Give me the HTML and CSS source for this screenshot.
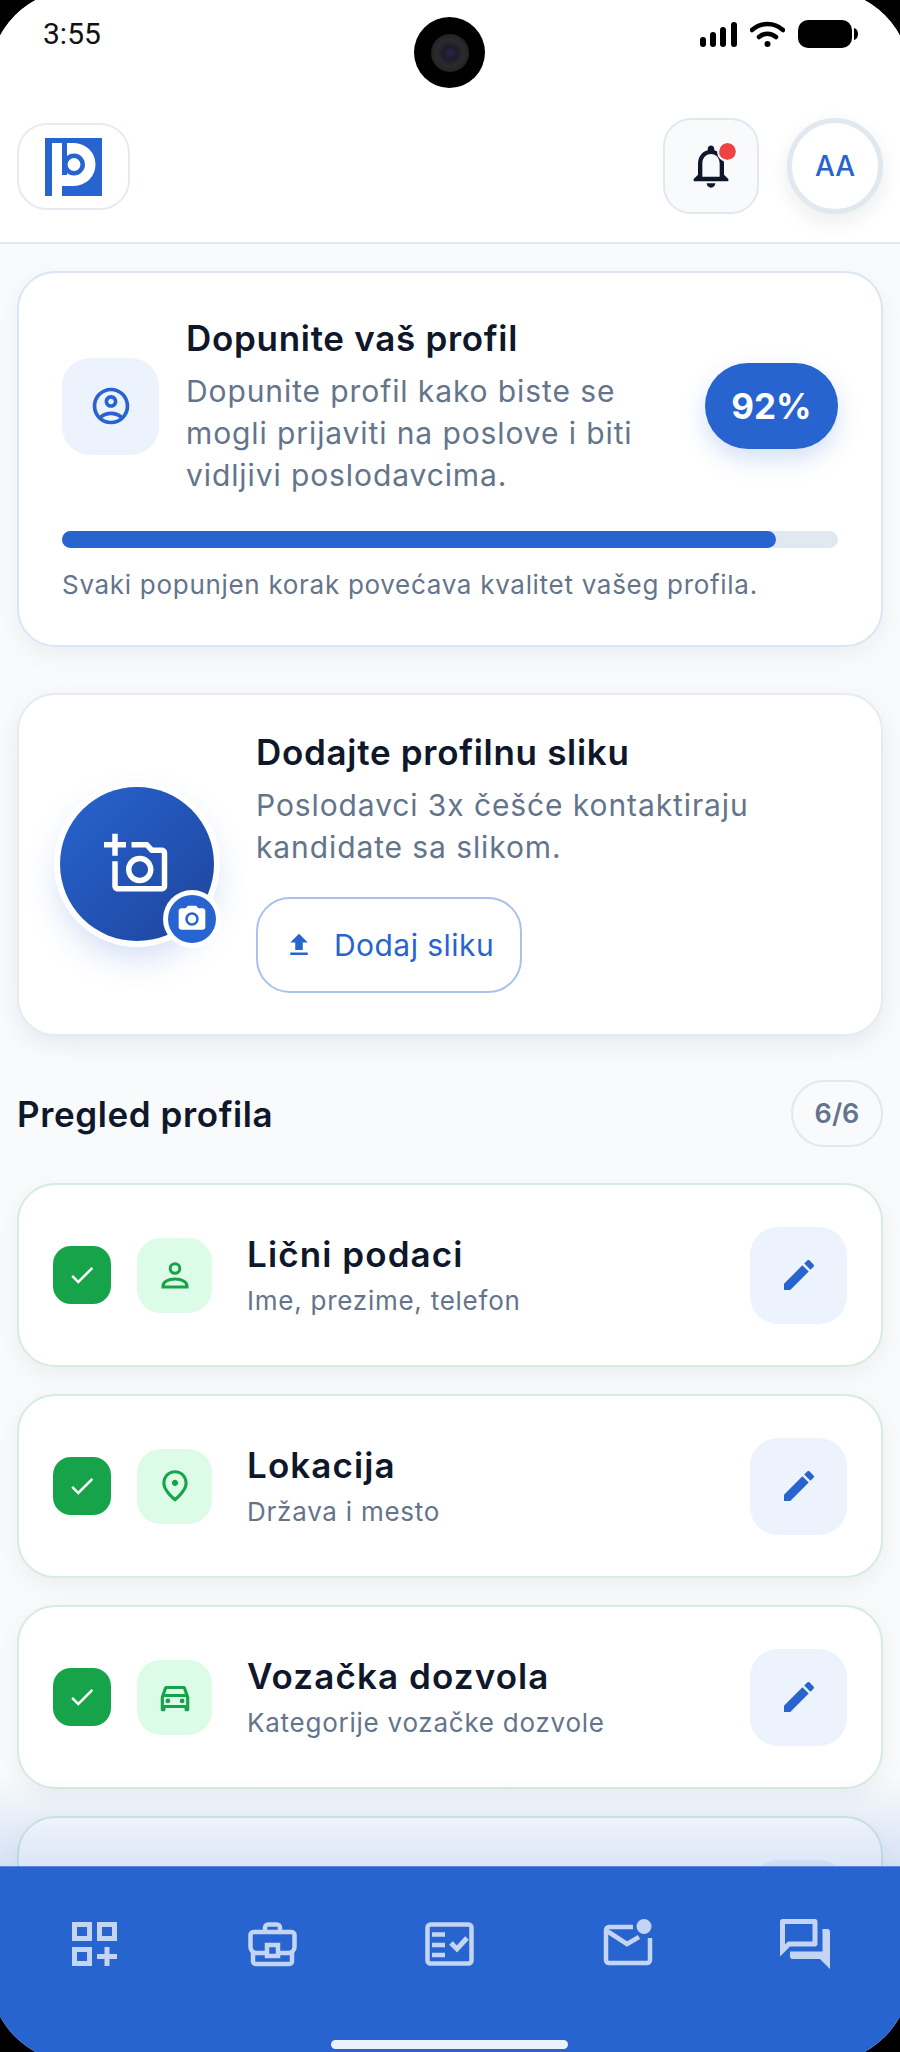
FILE: index.html
```html
<!DOCTYPE html>
<html>
<head>
  <meta charset="utf-8">
  <title>Pregled profila</title>
  <link rel="stylesheet" href="styles.css">
</head>
<body>
  <div class="screen">
    <div class="camera"><span class="lens"></span></div>

    <div class="status-bar">
      <span class="time">3:55</span>
      <div class="status-icons">
        <svg width="37" height="25" viewBox="0 0 37 25"><rect x="0" y="15" width="6" height="10" rx="3"/><rect x="10" y="10" width="6" height="15" rx="3"/><rect x="20" y="5" width="6" height="20" rx="3"/><rect x="31" y="0" width="6" height="25" rx="3"/></svg>
        <svg width="35" height="26" viewBox="0 0 35 26"><path d="M2 9C11 1 24 1 33 9M9 16c5-4.5 12-4.500 17 0" fill="none" stroke="#000" stroke-width="4.500" stroke-linecap="round"/><circle cx="17.500" cy="23" r="3"/></svg>
        <svg width="60" height="28" viewBox="0 0 60 28"><rect x="0" y="0" width="54" height="28" rx="10"/><path d="M56 8c2.500.5 4 3 4 6s-1.500 5.500-4 6z"/></svg>
      </div>
    </div>

    <header class="top-bar">
      <div class="logo-box">
        <svg width="57" height="58" viewBox="0 0 57 58">
          <rect width="57" height="58" fill="#2764cf"/>
          <path d="M7 5H29a21.500 21.500 0 0 1 0 43H17V58H7z" fill="#fff"/>
          <rect x="17" y="5" width="5" height="32" fill="#2764cf"/>
          <circle cx="29" cy="26.500" r="8.700" fill="#fff" stroke="#2764cf" stroke-width="4.500"/>
        </svg>
      </div>
      <div class="top-actions">
        <div class="bell-btn">
          <svg width="52" height="52" viewBox="0 0 24 24" fill="#0f172a"><path d="M12 22c1.100 0 2-.9 2-2h-4c0 1.100.9 2 2 2zm6-6v-5c0-3.070-1.630-5.640-4.500-6.320V4c0-.83-.67-1.500-1.500-1.500s-1.500.67-1.500 1.500v.68C7.640 5.360 6 7.920 6 11v5l-2 2v1h16v-1l-2-2zm-2 1H8v-6c0-2.480 1.510-4.500 4-4.500s4 2.020 4 4.500v6z"/></svg>
          <span class="bell-dot"></span>
        </div>
        <div class="avatar">AA</div>
      </div>
    </header>

    <main class="content">
      <section class="card progress-card">
        <div class="progress-row">
          <div class="soft-box">
            <svg width="44" height="44" viewBox="0 0 24 24" fill="#2764cf"><path d="M12 2C6.480 2 2 6.480 2 12s4.480 10 10 10 10-4.480 10-10S17.520 2 12 2zM7.350 18.500C8.660 17.560 10.260 17 12 17s3.340.56 4.650 1.500C15.340 19.440 13.740 20 12 20s-3.340-.56-4.650-1.500zm10.790-1.380C16.450 15.800 14.320 15 12 15s-4.450.8-6.140 2.120C4.700 15.730 4 13.950 4 12c0-4.420 3.580-8 8-8s8 3.580 8 8c0 1.950-.7 3.730-1.860 5.120z"/><path d="M12 6c-1.930 0-3.500 1.570-3.500 3.500S10.070 13 12 13s3.500-1.570 3.500-3.500S13.930 6 12 6zm0 5c-.83 0-1.500-.67-1.500-1.500S11.170 8 12 8s1.500.67 1.500 1.500S12.830 11 12 11z"/></svg>
          </div>
          <div class="progress-text">
            <h2 class="card-title">Dopunite vaš profil</h2>
            <p class="card-desc">Dopunite profil kako biste se mogli prijaviti na poslove i biti vidljivi poslodavcima.</p>
          </div>
          <div class="percent-pill">92%</div>
        </div>
        <div class="progress-track"><div class="progress-fill" style="width: 92%"></div></div>
        <p class="progress-note">Svaki popunjen korak povećava kvalitet vašeg profila.</p>
      </section>

      <section class="card photo-card">
        <div class="photo-circle">
          <svg width="66" height="66" viewBox="0 0 24 24" fill="#fff"><path d="M21 6h-3.170L16 4h-6v2h5.120l1.830 2H21v12H5v-9H3v9c0 1.100.9 2 2 2h16c1.100 0 2-.9 2-2V8c0-1.100-.9-2-2-2zM8 14c0 2.760 2.240 5 5 5s5-2.240 5-5-2.240-5-5-5-5 2.240-5 5zm5-3c1.650 0 3 1.350 3 3s-1.350 3-3 3-3-1.350-3-3 1.350-3 3-3zM5 6h3V4H5V1H3v3H0v2h3v3h2z"/></svg>
          <span class="photo-badge">
            <svg width="32" height="32" viewBox="0 0 24 24" fill="#fff"><path d="M9 2 7.170 4H4c-1.100 0-2 .9-2 2v12c0 1.100.9 2 2 2h16c1.100 0 2-.9 2-2V6c0-1.100-.9-2-2-2h-3.170L15 2H9zm3 15c-2.760 0-5-2.240-5-5s2.240-5 5-5 5 2.240 5 5-2.240 5-5 5z"/><circle cx="12" cy="12" r="3.200"/></svg>
          </span>
        </div>
        <div class="photo-text">
          <h2 class="card-title">Dodajte profilnu sliku</h2>
          <p class="card-desc">Poslodavci 3x češće kontaktiraju kandidate sa slikom.</p>
          <div class="upload-btn">
            <svg width="30" height="30" viewBox="0 0 24 24" fill="#2764cf"><path d="M9 16h6v-6h4l-7-7-7 7h4zm-4 2h14v2H5z"/></svg>
            <span>Dodaj sliku</span>
          </div>
        </div>
      </section>

      <div class="section-head">
        <h3 class="section-title">Pregled profila</h3>
        <span class="count-pill">6/6</span>
      </div>

      <div class="item-list">
        <div class="item">
          <span class="check-box"><svg width="30" height="30" viewBox="0 0 24 24" fill="#fff"><path d="M9 16.170 4.830 12l-1.420 1.410L9 19 21 7l-1.410-1.410z"/></svg></span>
          <span class="item-icon">
            <svg width="28" height="27" viewBox="0 0 28 27" fill="none" stroke="#16a34a" stroke-width="3"><circle cx="14" cy="6.500" r="4.800"/><path d="M2 25v-1c0-4 5-7 12-7s12 3 12 7v1z"/></svg>
          </span>
          <div class="item-text">
            <div class="item-title">Lični podaci</div>
            <div class="item-sub">Ime, prezime, telefon</div>
          </div>
          <span class="soft-box edit-btn"><svg width="40" height="40" viewBox="0 0 24 24" fill="#2764cf"><path d="M3 17.250V21h3.750L17.810 9.940l-3.750-3.750L3 17.250zM20.710 7.040c.39-.39.39-1.020 0-1.410l-2.340-2.340c-.39-.39-1.020-.39-1.410 0l-1.830 1.830 3.750 3.750 1.830-1.830z"/></svg></span>
        </div>

        <div class="item">
          <span class="check-box"><svg width="30" height="30" viewBox="0 0 24 24" fill="#fff"><path d="M9 16.170 4.830 12l-1.420 1.410L9 19 21 7l-1.410-1.410z"/></svg></span>
          <span class="item-icon">
            <svg width="38" height="38" viewBox="0 0 24 24" fill="#16a34a"><path d="M12 12c-1.100 0-2-.9-2-2s.9-2 2-2 2 .9 2 2-.9 2-2 2zm6-1.800C18 6.570 15.350 4 12 4s-6 2.570-6 6.200c0 2.340 1.950 5.440 6 9.140 4.050-3.700 6-6.800 6-9.140zM12 2c4.200 0 8 3.220 8 8.200 0 3.320-2.670 7.250-8 11.800-5.330-4.550-8-8.480-8-11.800C4 5.220 7.800 2 12 2z"/></svg>
          </span>
          <div class="item-text">
            <div class="item-title">Lokacija</div>
            <div class="item-sub">Država i mesto</div>
          </div>
          <span class="soft-box edit-btn"><svg width="40" height="40" viewBox="0 0 24 24" fill="#2764cf"><path d="M3 17.250V21h3.750L17.810 9.940l-3.750-3.750L3 17.250zM20.710 7.040c.39-.39.39-1.020 0-1.410l-2.340-2.340c-.39-.39-1.020-.39-1.410 0l-1.830 1.830 3.750 3.750 1.830-1.830z"/></svg></span>
        </div>

        <div class="item">
          <span class="check-box"><svg width="30" height="30" viewBox="0 0 24 24" fill="#fff"><path d="M9 16.170 4.830 12l-1.420 1.410L9 19 21 7l-1.410-1.410z"/></svg></span>
          <span class="item-icon">
            <svg width="38" height="38" viewBox="0 0 24 24" fill="#16a34a"><path d="M18.920 6.010C18.720 5.420 18.160 5 17.500 5h-11c-.66 0-1.210.42-1.420 1.010L3 12v8c0 .55.45 1 1 1h1c.55 0 1-.45 1-1v-1h12v1c0 .55.45 1 1 1h1c.55 0 1-.45 1-1v-8l-2.080-5.990zM6.850 7h10.290l1.080 3.110H5.770L6.850 7zM19 17H5v-5h14v5z"/><circle cx="7.500" cy="14.500" r="1.500"/><circle cx="16.500" cy="14.500" r="1.500"/></svg>
          </span>
          <div class="item-text">
            <div class="item-title">Vozačka dozvola</div>
            <div class="item-sub">Kategorije vozačke dozvole</div>
          </div>
          <span class="soft-box edit-btn"><svg width="40" height="40" viewBox="0 0 24 24" fill="#2764cf"><path d="M3 17.250V21h3.750L17.810 9.940l-3.750-3.750L3 17.250zM20.710 7.040c.39-.39.39-1.020 0-1.410l-2.340-2.340c-.39-.39-1.020-.39-1.410 0l-1.830 1.830 3.750 3.750 1.830-1.830z"/></svg></span>
        </div>

        <div class="item">
          <span class="check-box"></span>
          <span class="item-icon"></span>
          <div class="item-text"></div>
          <span class="soft-box edit-btn"></span>
        </div>
      </div>
    </main>

    <div class="nav-fade"></div>

    <nav class="bottom-nav">
      <svg width="45" height="49" viewBox="0 -3 45 49" fill="none" stroke="#c4d5f3" stroke-width="5"><rect x="2.500" y="2.500" width="15" height="14"/><rect x="27.500" y="2.500" width="15" height="14"/><rect x="2.500" y="27.500" width="15" height="14"/><path d="M25 34.500h20M35 25v19"/></svg>
      <svg width="49" height="49" viewBox="0 -3 49 49" fill="none" stroke="#c4d5f3" stroke-width="4.500"><path d="M17 10V5.500a3 3 0 0 1 3-3h9a3 3 0 0 1 3 3V10"/><path d="M2.500 13a3 3 0 0 1 3-3h38a3 3 0 0 1 3 3v12a6 6 0 0 1-6 6H8.500a6 6 0 0 1-6-6z"/><path d="M5 31v8.500a2.500 2.500 0 0 0 2.500 2.500h34a2.500 2.500 0 0 0 2.500-2.500V31"/><rect x="19" y="23" width="11" height="11" fill="#2764cf"/></svg>
      <svg width="49" height="49" viewBox="0 -3 49 49" fill="none" stroke="#c4d5f3" stroke-width="4.500"><rect x="2.500" y="2.500" width="44" height="39" rx="3"/><path d="M7 12.500h13M7 23h13M7 33h13"/><path d="M26 21l6 6 10-11" stroke-width="5"/></svg>
      <svg width="50" height="49" viewBox="0 0 50 49" fill="none" stroke="#c4d5f3" stroke-width="4.500"><path d="M30 8H6a3 3 0 0 0-3 3v30a3 3 0 0 0 3 3h38a3 3 0 0 0 3-3V19"/><path d="M4 12l20 13 12-7"/><circle cx="41" cy="7.500" r="7.500" fill="#c4d5f3" stroke="none"/></svg>
      <svg width="50" height="50" viewBox="2 2 20 20" fill="#c4d5f3"><path d="M15 4v7H5.170l-.59.59-.58.58V4h11m1-2H3c-.55 0-1 .45-1 1v14l4-4h10c.55 0 1-.45 1-1V3c0-.55-.45-1-1-1zm5 4h-2v9H6v2c0 .55.45 1 1 1h11l4 4V7c0-.55-.45-1-1-1z"/></svg>
      <span class="home-bar"></span>
    </nav>
  </div>
</body>
</html>
```

FILE: styles.css
```css
* {
  margin: 0;
  padding: 0;
  box-sizing: border-box;
}

body {
  font-family: Inter, 'Noto Sans', sans-serif;
  background: #000;
  width: 900px;
  height: 2052px;
  overflow: hidden;
}

/* the phone's rounded glass runs a little past the picture edge */
.screen {
  position: relative;
  width: 900px;
  height: 2052px;
  overflow: hidden;
  background: #f8fafc;
  clip-path: inset(-10px round 86px);
}

.camera {
  position: absolute;
  top: 17px;
  left: 414px;
  width: 71px;
  height: 71px;
  border-radius: 50%;
  background: #000;
  display: flex;
  align-items: center;
  justify-content: center;
}

.lens {
  width: 38px;
  height: 38px;
  border-radius: 50%;
  background: radial-gradient(circle, #2a2550 0%, #1c1c2a 25%, #2b2b2e 50%, #161616 100%);
}

/* Status bar */
.status-bar {
  height: 98px;
  background: #fff;
  display: flex;
  justify-content: space-between;
  padding: 16px 42px 0 43px;
}

.time {
  font-family: Roboto, sans-serif;
  font-size: 30px;
  line-height: 36px;
  color: #111;
}

.status-icons {
  display: flex;
  align-items: center;
  gap: 13px;
  height: 28px;
  margin-top: 4px;
}

/* Header */
.top-bar {
  height: 146px;
  background: #fff;
  border-bottom: 2px solid #e2e8f0;
  padding: 20px 17px 0 17px;
  display: flex;
  align-items: flex-start;
  justify-content: space-between;
}

.logo-box {
  width: 113px;
  height: 87px;
  margin-top: 5px;
  border: 2px solid #e6ebf3;
  border-radius: 30px;
  display: flex;
  align-items: center;
  justify-content: center;
}

.top-actions {
  display: flex;
  gap: 28px;
}

.bell-btn {
  position: relative;
  width: 96px;
  height: 96px;
  background: #f8fafc;
  border: 2px solid #e2e8f0;
  border-radius: 28px;
  display: flex;
  align-items: center;
  justify-content: center;
}

.bell-dot {
  position: absolute;
  top: 23px;
  left: 54px;
  width: 17px;
  height: 17px;
  border-radius: 50%;
  background: #ef4444;
  outline: 2px solid #f8fafc;
}

.avatar {
  width: 96px;
  height: 96px;
  background: #fff;
  border: 5px solid #e2e8f0;
  border-radius: 50%;
  box-shadow: 0 8px 20px rgba(15, 23, 42, 0.08);
  display: flex;
  align-items: center;
  justify-content: center;
  color: #2764cf;
  font-size: 28px;
  font-weight: 500;
}

/* Content */
.content {
  padding: 27px 17px 0;
}

.card {
  background: #fff;
  border: 2px solid #dbe6f5;
  border-radius: 38px;
  box-shadow: 0 8px 24px rgba(15, 23, 42, 0.05);
}

.card-title {
  margin-bottom: 10px;
  font-size: 35px;
  line-height: 44px;
  letter-spacing: 0.7px;
  font-weight: 600;
  color: #0f172a;
}

.card-desc {
  font-size: 30px;
  line-height: 42px;
  letter-spacing: 0.9px;
  color: #64748b;
}

.soft-box {
  flex: none;
  width: 97px;
  height: 97px;
  background: #edf3fc;
  border-radius: 28px;
  display: flex;
  align-items: center;
  justify-content: center;
}

.progress-card {
  height: 376px;
  margin-bottom: 46px;
  padding: 43px 43px 0;
}

.progress-row {
  display: flex;
  align-items: center;
}

.progress-text {
  width: 465px;
  margin-left: 27px;
  margin-right: 54px;
}

.percent-pill {
  flex: none;
  width: 133px;
  height: 86px;
  background: #2764cf;
  border-radius: 43px;
  box-shadow: 0 10px 24px rgba(39, 100, 207, 0.2);
  display: flex;
  align-items: center;
  justify-content: center;
  color: #fff;
  font-size: 35px;
  font-weight: 700;
}

.progress-track {
  height: 17px;
  margin-top: 35px;
  background: #e2e8f0;
  border-radius: 9px;
}

.progress-fill {
  height: 100%;
  background: #2764cf;
  border-radius: 9px;
}

.progress-note {
  margin-top: 20px;
  font-size: 26px;
  line-height: 34px;
  letter-spacing: 0.7px;
  color: #64748b;
}

.photo-card {
  height: 343px;
  padding: 35px 40px 0 41px;
  display: flex;
  box-shadow: 0 8px 24px rgba(15, 23, 42, 0.07);
  border-color: #e6ebf3;
}

.photo-circle {
  position: relative;
  flex: none;
  width: 154px;
  height: 154px;
  margin-top: 57px;
  border-radius: 50%;
  background: linear-gradient(135deg, #2764cf, #1e449c);
  box-shadow: 0 0 0 6px #fff, 0 16px 34px rgba(39, 100, 207, 0.22);
  display: flex;
  align-items: center;
  justify-content: center;
}

.photo-badge {
  position: absolute;
  right: -2px;
  bottom: -2px;
  width: 48px;
  height: 48px;
  border-radius: 50%;
  background: #2764cf;
  box-shadow: 0 0 0 5px #fff;
  display: flex;
  align-items: center;
  justify-content: center;
}

.photo-text {
  margin-left: 42px;
}

.upload-btn {
  width: 266px;
  height: 96px;
  margin-top: 29px;
  border: 2px solid #a9c2ec;
  border-radius: 34px;
  display: flex;
  align-items: center;
  gap: 20px;
  padding-left: 26px;
  color: #2764cf;
  font-size: 30px;
  letter-spacing: 0.45px;
}

.section-head {
  height: 67px;
  margin-top: 44px;
  display: flex;
  align-items: center;
  justify-content: space-between;
}

.section-title {
  font-size: 35px;
  letter-spacing: 0.6px;
  font-weight: 600;
  color: #0f172a;
}

.count-pill {
  width: 92px;
  height: 67px;
  background: #f8fafc;
  border: 2px solid #e2e8f0;
  border-radius: 34px;
  display: flex;
  align-items: center;
  justify-content: center;
  color: #64748b;
  font-size: 27px;
  font-weight: 600;
}

/* Completed steps */
.item-list {
  margin-top: 36px;
  display: flex;
  flex-direction: column;
  gap: 27px;
}

.item {
  height: 184px;
  background: #fff;
  border: 2px solid #d6ecdf;
  border-radius: 38px;
  box-shadow: 0 8px 24px rgba(15, 23, 42, 0.05);
  padding: 0 34px 0 34px;
  display: flex;
  align-items: center;
}

.check-box {
  flex: none;
  width: 58px;
  height: 58px;
  background: #16a34a;
  border-radius: 18px;
  display: flex;
  align-items: center;
  justify-content: center;
}

.item-icon {
  flex: none;
  width: 75px;
  height: 75px;
  margin-left: 26px;
  background: #dcfce7;
  border-radius: 24px;
  display: flex;
  align-items: center;
  justify-content: center;
}

.item-text {
  flex: 1;
  margin-left: 35px;
}

.item-title {
  font-size: 35px;
  line-height: 44px;
  letter-spacing: 1.1px;
  font-weight: 600;
  color: #0f172a;
}

.item-sub {
  margin-top: 8px;
  font-size: 26px;
  line-height: 34px;
  letter-spacing: 0.75px;
  color: #64748b;
}

.edit-btn {
  width: 97px;
}

/* Bottom navigation */
.nav-fade {
  position: absolute;
  left: 0;
  right: 0;
  bottom: 186px;
  height: 90px;
  background: linear-gradient(rgba(39, 100, 207, 0), rgba(39, 100, 207, 0.16));
}

.bottom-nav {
  position: absolute;
  left: 0;
  right: 0;
  bottom: 0;
  height: 186px;
  background: #2764cf;
  border-top: 1px solid #5a8ae0;
  padding: 52px 6px 0;
  display: grid;
  grid-template-columns: repeat(5, 1fr);
  justify-items: center;
  align-items: start;
}

.home-bar {
  position: absolute;
  left: 331px;
  bottom: 3px;
  width: 237px;
  height: 9px;
  background: #eaf1fb;
  border-radius: 5px;
}
```
